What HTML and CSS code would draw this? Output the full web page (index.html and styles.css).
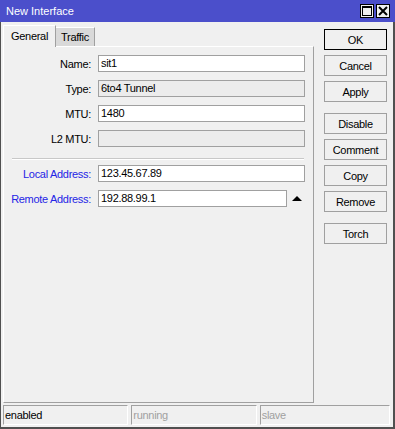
FILE: index.html
```html
<!DOCTYPE html>
<html lang="en">
<head>
    <meta charset="UTF-8">
    <title>New Interface</title>
    <link rel="stylesheet" href="styles.css">
</head>
<body>

<div class="window">
    <div class="titlebar">
        <span class="title">New Interface</span>
        <div class="title-buttons">
            <span class="tbtn">
                <svg width="10" height="10" viewBox="0 0 10 10">
                    <rect x="0.5" y="0.5" width="9" height="9" fill="none" stroke="#000"/>
                    <rect x="0" y="0" width="10" height="2" fill="#000"/>
                </svg>
            </span>
            <span class="tbtn">
                <svg width="10" height="10" viewBox="0 0 10 10">
                    <path d="M1 1 L9 9 M9 1 L1 9" stroke="#000" stroke-width="2"/>
                </svg>
            </span>
        </div>
    </div>

    <div class="frame">
        <div class="main">
            <div class="left">
                <div class="tabs">
                    <div class="tab active">General</div>
                    <div class="tab">Traffic</div>
                </div>
                <div class="panel">
                    <div class="row">
                        <label class="field-label">Name:</label>
                        <div class="input">sit1</div>
                    </div>
                    <div class="row">
                        <label class="field-label">Type:</label>
                        <div class="input readonly">6to4 Tunnel</div>
                    </div>
                    <div class="row">
                        <label class="field-label">MTU:</label>
                        <div class="input">1480</div>
                    </div>
                    <div class="row">
                        <label class="field-label">L2 MTU:</label>
                        <div class="input readonly"></div>
                    </div>

                    <div class="separator"></div>

                    <div class="row">
                        <label class="field-label blue">Local Address:</label>
                        <div class="input">123.45.67.89</div>
                    </div>
                    <div class="row">
                        <label class="field-label blue">Remote Address:</label>
                        <div class="input short">192.88.99.1</div>
                        <span class="arrow-up"></span>
                    </div>
                </div>
            </div>

            <div class="buttons">
                <button class="btn default">OK</button>
                <button class="btn">Cancel</button>
                <button class="btn group-end">Apply</button>
                <button class="btn">Disable</button>
                <button class="btn">Comment</button>
                <button class="btn">Copy</button>
                <button class="btn group-end">Remove</button>
                <button class="btn">Torch</button>
            </div>
        </div>

        <div class="statusbar">
            <div class="pane">enabled</div>
            <div class="pane off">running</div>
            <div class="pane off last">slave</div>
        </div>
    </div>
</div>

</body>
</html>
```

FILE: styles.css
```css
body {
    margin: 0;
    padding: 0;
    font-family: "Liberation Sans", Arial, sans-serif;
    font-size: 11px;
    letter-spacing: -0.3px;
    color: #000;
    background-color: #f0f0f0;
}

.window {
    width: 395px;
    height: 429px;
    display: flex;
    flex-direction: column;
}

.titlebar {
    height: 22px;
    background-color: #4b4fcb;
    display: flex;
    align-items: center;
    justify-content: space-between;
    flex-shrink: 0;
}

.title {
    color: white;
    font-size: 11px;
    letter-spacing: 0;
    padding-left: 6px;
}

.title-buttons {
    display: flex;
    gap: 2px;
    padding-right: 5px;
}

.tbtn {
    width: 12px;
    height: 12px;
    border: 1px solid #000;
    background-color: #f0f0f0;
    display: flex;
    align-items: center;
    justify-content: center;
}

.frame {
    flex: 1;
    display: flex;
    flex-direction: column;
    border-left: 1px solid #505050;
    border-right: 2px solid #505050;
    border-bottom: 2px solid #505050;
    padding: 0 3px 2px 2px;
}

.main {
    display: flex;
}

.left {
    width: 311px;
}

.tabs {
    display: flex;
    align-items: flex-end;
    height: 21px;
    margin-top: 3px;
}

.tab {
    height: 19px;
    box-sizing: border-box;
    padding: 0 5px;
    line-height: 18px;
    background-color: #d9d9d9;
    border-top: 1px solid #fff;
    border-right: 1px solid #a0a0a0;
}

.tab.active {
    height: 22px;
    margin-bottom: -1px;
    padding: 0 7px;
    line-height: 20px;
    background-color: #f0f0f0;
    border-left: 1px solid #fff;
    position: relative;
}

.panel {
    height: 357px;
    box-sizing: border-box;
    border-top: 1px solid #fff;
    border-left: 1px solid #fff;
    border-right: 1px solid #a0a0a0;
    border-bottom: 1px solid #a0a0a0;
    padding-top: 8px;
}

.row {
    display: flex;
    align-items: center;
    height: 17px;
    margin-bottom: 8px;
}

.field-label {
    width: 87px;
    text-align: right;
    margin-right: 7px;
}

.field-label.blue {
    color: #2424e6;
}

.input {
    width: 207px;
    height: 17px;
    box-sizing: border-box;
    border: 1px solid #a0a0a0;
    background-color: white;
    padding-left: 2px;
    line-height: 15px;
}

.input.readonly {
    background-color: #ececec;
}

.input.short {
    width: 189px;
}

.arrow-up {
    width: 0;
    height: 0;
    margin-left: 5px;
    border-left: 5px solid transparent;
    border-right: 5px solid transparent;
    border-bottom: 5px solid #000;
}

.separator {
    height: 1px;
    margin: 11px 9px 5px 8px;
    background-color: #c8c8c8;
    border-bottom: 1px solid #fff;
}

.buttons {
    display: flex;
    flex-direction: column;
    margin-left: 10px;
    margin-top: 7px;
}

.btn {
    width: 63px;
    height: 21px;
    margin-bottom: 5px;
    padding: 0;
    font-family: inherit;
    font-size: 11px;
    letter-spacing: -0.3px;
    color: #000;
    background-color: #f0f0f0;
    border: 1px solid #a0a0a0;
}

.btn.default {
    border-color: #000;
}

.btn.group-end {
    margin-bottom: 11px;
}

.statusbar {
    display: flex;
    gap: 3px;
    margin-top: 2px;
}

.pane {
    width: 126px;
    height: 20px;
    box-sizing: border-box;
    border-top: 1px solid #a0a0a0;
    border-left: 1px solid #a0a0a0;
    border-right: 1px solid #fff;
    border-bottom: 1px solid #fff;
    padding-left: 1px;
    line-height: 18px;
}

.pane.off {
    color: #a0a0a0;
}

.pane.last {
    width: 131px;
}
```
